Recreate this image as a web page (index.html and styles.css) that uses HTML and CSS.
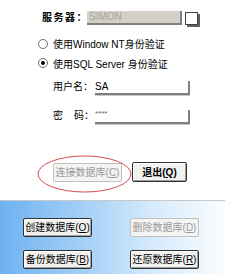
FILE: index.html
```html
<!DOCTYPE html>
<html>
<head>
<meta charset="utf-8">
<link rel="stylesheet" href="styles.css">
</head>
<body>
<div class="page">
  <div class="form">
    <div class="server-row">
      <span class="lbl-server">服务器：</span>
      <div class="server-box">SIMON</div>
      <div class="browse-btn"></div>
    </div>
    <div class="radio-row"><span class="radio"></span><span>使用Window NT身份验证</span></div>
    <div class="radio-row"><span class="radio checked"></span><span>使用SQL Server 身份验证</span></div>
    <div class="field-row"><span class="flbl">用户名：</span><div class="field">SA</div></div>
    <div class="field-row second"><span class="flbl">密&nbsp;&nbsp;&nbsp;&nbsp;码：</span><div class="field pw">****</div></div>
    <div class="actions">
      <div class="connect-wrap">
        <button class="btn btn-connect" disabled>连接数据库(<u>C</u>)</button>
        <svg class="ring" width="95" height="38" viewBox="0 0 95 38"><ellipse cx="47.5" cy="19" rx="46.5" ry="18" fill="none" stroke="#d9484f" stroke-width="1"/></svg>
      </div>
      <button class="btn btn-exit">退出(<u>Q</u>)</button>
    </div>
  </div>
  <div class="panel">
    <button class="btn pbtn">创建数据库(<u>O</u>)</button>
    <button class="btn pbtn" disabled>删除数据库(<u>D</u>)</button>
    <button class="btn pbtn">备份数据库(<u>B</u>)</button>
    <button class="btn pbtn">还原数据库(<u>R</u>)</button>
  </div>
</div>
</body>
</html>
```
FILE: styles.css
```css
html, body {
  margin: 0;
  padding: 0;
  background: #fff;
}
body {
  font-family: "Liberation Sans", "Noto Sans CJK SC", sans-serif;
  font-size: 10px;
  color: #000;
  white-space: nowrap;
}
.page {
  width: 225px;
  height: 274px;
  display: flex;
  flex-direction: column;
  overflow: hidden;
}
.form {
  height: 200px;
  padding-left: 38px;
  box-sizing: border-box;
}
.server-row {
  display: flex;
  align-items: flex-start;
  margin-top: 11px;
  height: 23px;
}
.lbl-server {
  width: 49px;
  padding-left: 4px;
  box-sizing: border-box;
  line-height: 14px;
  font-weight: bold;
  letter-spacing: 1.5px;
}
.server-box {
  width: 91px;
  height: 12px;
  background: #d4d0c8;
  color: #a8a6a0;
  border-right: 2px solid #808080;
  border-bottom: 2px solid #808080;
  line-height: 12px;
  padding-left: 2px;
  font-size: 10px;
}
.browse-btn {
  margin-left: 3px;
  margin-top: 1px;
  width: 11px;
  height: 11px;
  background: #fff;
  border: 1px solid #404040;
  box-shadow: 2px 2px 0 #606060;
}
.radio-row {
  display: flex;
  align-items: center;
  height: 19.5px;
  gap: 5px;
}
.radio {
  width: 8px;
  height: 8px;
  border: 1px solid #707070;
  border-radius: 50%;
  background: #fff;
  position: relative;
}
.radio.checked::after {
  content: "";
  position: absolute;
  left: 2px;
  top: 2px;
  width: 4px;
  height: 4px;
  border-radius: 50%;
  background: #000;
}
.field-row {
  display: flex;
  align-items: flex-end;
  height: 14px;
  margin-top: 8px;
  padding-left: 15px;
}
.field-row.second {
  margin-top: 15px;
}
.flbl {
  width: 42px;
  line-height: 12px;
  padding-bottom: 2px;
}
.field {
  width: 93px;
  height: 12px;
  line-height: 11px;
  border-right: 2px solid #808080;
  border-bottom: 2px solid #808080;
  box-shadow: 0 1px 0 #c8c8c8;
}
.field.pw {
  font-size: 8px;
  color: #606060;
  line-height: 8px;
}
.actions {
  display: flex;
  align-items: center;
  margin-top: 38px;
  padding-left: 15px;
}
.connect-wrap {
  position: relative;
  margin-right: 10px;
  display: flex;
}
.ring {
  position: absolute;
  left: -16px;
  top: -8px;
  pointer-events: none;
}
.btn {
  font-family: "Liberation Sans", "Noto Sans CJK SC", sans-serif;
  font-size: 10px;
  white-space: nowrap;
  height: 19px;
  padding: 0;
  margin: 0;
  background: #f1f1ef;
  color: #000;
  border: 1px solid #303030;
  box-shadow: inset 1px 1px 0 #fff, inset -1px -1px 0 #a0a0a0;
  border-radius: 2px;
  line-height: 15px;
}
.btn[disabled] {
  color: #9a9a9a;
  border-color: #c0c0c0;
  background: #f4f4f2;
  box-shadow: none;
}
.btn-connect {
  width: 69px;
}
.btn-exit {
  width: 55px;
  height: 20px;
  font-weight: bold;
}
.panel {
  flex: 1;
  border-top: 1px solid #c8c8c8;
  background: linear-gradient(to right, #6db2f0 0%, #a3cdf6 35%, #d9ecfc 70%, #fbfdff 100%);
  display: grid;
  grid-template-columns: 69px 69px;
  grid-auto-rows: 19px;
  column-gap: 38px;
  row-gap: 13px;
  padding: 17px 0 0 23px;
  align-content: start;
}
.pbtn {
  width: 69px;
}
```
